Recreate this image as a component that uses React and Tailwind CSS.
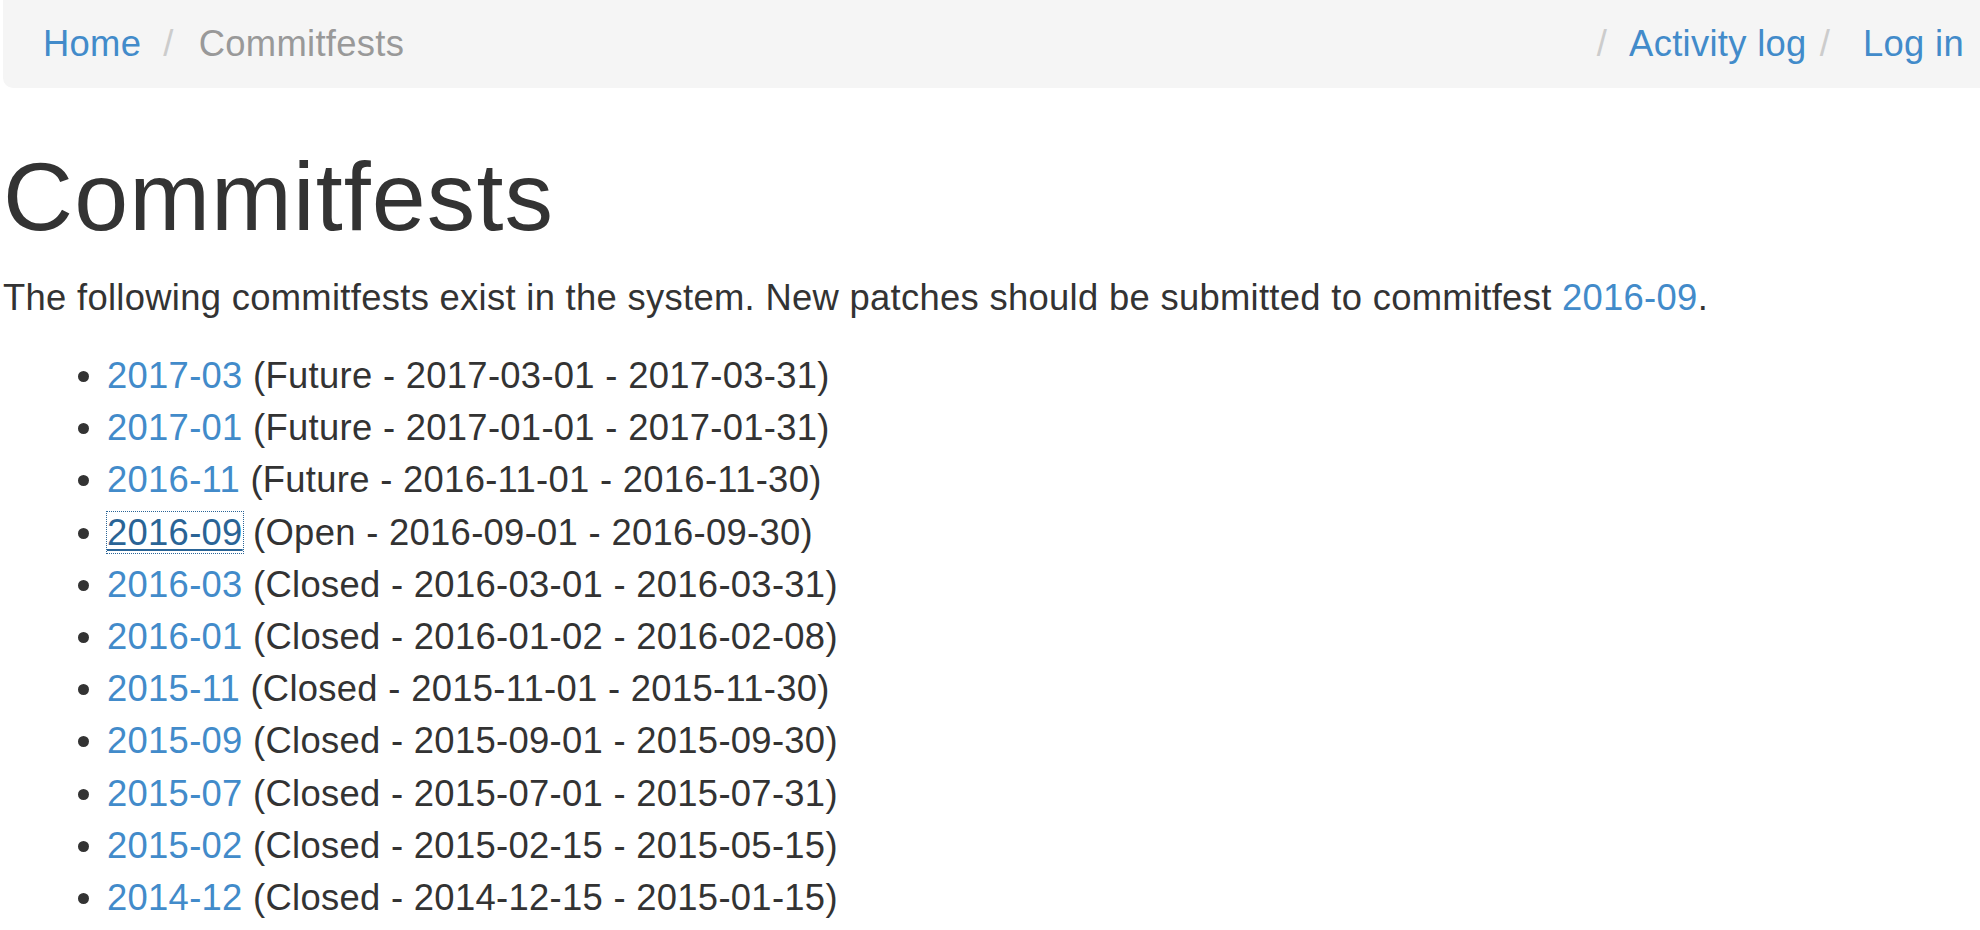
import React from 'react';

const fests = [
  { name: '2017-03', status: 'Future', start: '2017-03-01', end: '2017-03-31' },
  { name: '2017-01', status: 'Future', start: '2017-01-01', end: '2017-01-31' },
  { name: '2016-11', status: 'Future', start: '2016-11-01', end: '2016-11-30' },
  { name: '2016-09', status: 'Open', start: '2016-09-01', end: '2016-09-30', focused: true },
  { name: '2016-03', status: 'Closed', start: '2016-03-01', end: '2016-03-31' },
  { name: '2016-01', status: 'Closed', start: '2016-01-02', end: '2016-02-08' },
  { name: '2015-11', status: 'Closed', start: '2015-11-01', end: '2015-11-30' },
  { name: '2015-09', status: 'Closed', start: '2015-09-01', end: '2015-09-30' },
  { name: '2015-07', status: 'Closed', start: '2015-07-01', end: '2015-07-31' },
  { name: '2015-02', status: 'Closed', start: '2015-02-15', end: '2015-05-15' },
  { name: '2014-12', status: 'Closed', start: '2014-12-15', end: '2015-01-15' },
];

const Slash = ({ className = '' }) => (
  <span className={`text-[#ccc] ${className}`}>/</span>
);

export default function App() {
  return (
    <div className="min-h-screen bg-white pl-[3px] text-[#333] font-['Liberation_Sans',Arial,sans-serif] text-[36.4px] leading-[52.2px] tracking-[0.3px] overflow-hidden">
      {/* breadcrumb bar */}
      <div className="h-[88px] bg-[#f5f5f5] rounded-bl-[10px] flex items-center justify-between pl-[40px] pr-[16px]">
        <div className="flex items-center">
          <a href="#" className="text-[#428bca]">Home</a>
          <Slash className="ml-[22px]" />
          <span className="ml-[25px] text-[#999]">Commitfests</span>
        </div>
        <div className="flex items-center">
          <Slash />
          <a href="#" className="ml-[22px] text-[#428bca]">Activity log</a>
          <Slash className="ml-[13px]" />
          <a href="#" className="ml-[33px] text-[#428bca]">Log in</a>
        </div>
      </div>

      <h1 className="mt-[56px] text-[97px] leading-[1.1] font-normal tracking-[1.1px]">Commitfests</h1>

      <p className="mt-[21px]">
        The following commitfests exist in the system. New patches should be submitted to commitfest{' '}
        <a href="#" className="text-[#428bca]">2016-09</a>.
      </p>

      <ul className="mt-[26px] list-disc pl-[104px]">
        {fests.map((f) => (
          <li key={f.name}>
            <a
              href="#"
              className={
                f.focused
                  ? 'text-[#2a6496] underline decoration-2 underline-offset-[4px] outline-1 outline-dotted outline-[#2a6496]'
                  : 'text-[#428bca]'
              }
            >
              {f.name}
            </a>{' '}
            ({f.status} - {f.start} - {f.end})
          </li>
        ))}
      </ul>
    </div>
  );
}
